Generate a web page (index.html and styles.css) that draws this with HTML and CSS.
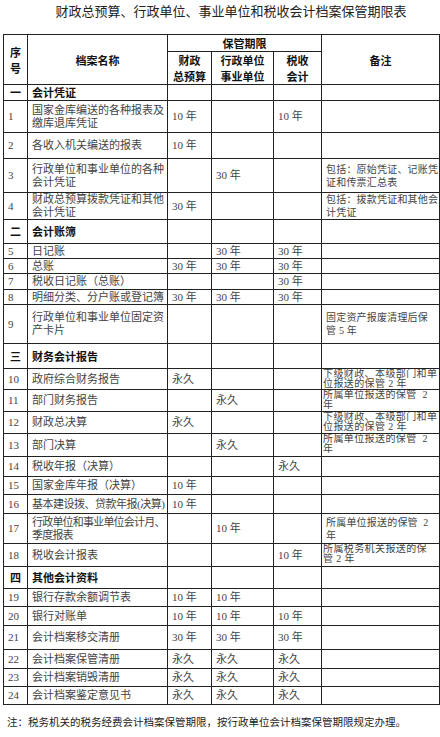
FILE: index.html
```html
<!DOCTYPE html>
<html lang="zh-CN">
<head>
<meta charset="utf-8">
<title>财政总预算、行政单位、事业单位和税收会计档案保管期限表</title>
<link rel="stylesheet" href="styles.css">
</head>
<body>
<div class="page">
  <h1 class="title">财政总预算、行政单位、事业单位和税收会计档案保管期限表</h1>
  <table class="grid">
    <colgroup>
      <col class="c-no"><col class="c-name"><col class="c-v1"><col class="c-v2"><col class="c-v3"><col class="c-rem">
    </colgroup>
    <thead>
      <tr class="h16">
        <th rowspan="2" class="no-h">序<br>号</th>
        <th rowspan="2">档案名称</th>
        <th colspan="3">保管期限</th>
        <th rowspan="2">备注</th>
      </tr>
      <tr class="h32">
        <th>财政<br>总预算</th>
        <th>行政单位<br>事业单位</th>
        <th>税收<br>会计</th>
      </tr>
    </thead>
    <tbody>
      <tr class="h16 cat"><td class="no">一</td><td>会计凭证</td><td></td><td></td><td></td><td></td></tr>
      <tr class="h32"><td class="no">1</td><td>国家金库编送的各种报表及<br>缴库退库凭证</td><td>10 年</td><td></td><td>10 年</td><td></td></tr>
      <tr class="h26"><td class="no">2</td><td>各收入机关编送的报表</td><td>10 年</td><td></td><td></td><td></td></tr>
      <tr class="h34"><td class="no">3</td><td>行政单位和事业单位的各种<br>会计凭证</td><td></td><td>30 年</td><td></td><td class="rem">包括：原始凭证、记账凭<br>证和传票汇总表</td></tr>
      <tr class="h27"><td class="no">4</td><td>财政总预算拨款凭证和其他<br>会计凭证</td><td>30 年</td><td></td><td></td><td class="rem">包括：拨款凭证和其他会<br>计凭证</td></tr>
      <tr class="h24 cat"><td class="no">二</td><td>会计账簿</td><td></td><td></td><td></td><td></td></tr>
      <tr class="h15"><td class="no">5</td><td>日记账</td><td></td><td>30 年</td><td>30 年</td><td></td></tr>
      <tr class="h15"><td class="no">6</td><td>总账</td><td>30 年</td><td>30 年</td><td>30 年</td><td></td></tr>
      <tr class="h16"><td class="no">7</td><td>税收日记账（总账）</td><td></td><td></td><td>30 年</td><td></td></tr>
      <tr class="h15"><td class="no">8</td><td>明细分类、分户账或登记簿</td><td>30 年</td><td>30 年</td><td>30 年</td><td></td></tr>
      <tr class="h39"><td class="no">9</td><td>行政单位和事业单位固定资<br>产卡片</td><td></td><td></td><td></td><td class="rem">固定资产报废清理后保<br>管 5 年</td></tr>
      <tr class="h25 cat"><td class="no">三</td><td>财务会计报告</td><td></td><td></td><td></td><td></td></tr>
      <tr class="h21"><td class="no">10</td><td>政府综合财务报告</td><td>永久</td><td></td><td></td><td class="rem tight">下级财政、本级部门和单<br>位报送的保管 2 年</td></tr>
      <tr class="h22"><td class="no">11</td><td>部门财务报告</td><td></td><td>永久</td><td></td><td class="rem tight">所属单位报送的保管&nbsp;&nbsp;2<br>年</td></tr>
      <tr class="h22"><td class="no">12</td><td>财政总决算</td><td>永久</td><td></td><td></td><td class="rem tight">下级财政、本级部门和单<br>位报送的保管 2 年</td></tr>
      <tr class="h23"><td class="no">13</td><td>部门决算</td><td></td><td>永久</td><td></td><td class="rem tight">所属单位报送的保管&nbsp;&nbsp;2<br>年</td></tr>
      <tr class="h20"><td class="no">14</td><td>税收年报（决算）</td><td></td><td></td><td>永久</td><td></td></tr>
      <tr class="h18"><td class="no">15</td><td>国家金库年报（决算）</td><td>10 年</td><td></td><td></td><td></td></tr>
      <tr class="h19"><td class="no">16</td><td class="squeeze">基本建设拨、贷款年报(决算)</td><td>10 年</td><td></td><td></td><td></td></tr>
      <tr class="h30"><td class="no">17</td><td class="squeeze-more">行政单位和事业单位会计月、<br>季度报表</td><td></td><td>10 年</td><td></td><td class="rem">所属单位报送的保管&nbsp;&nbsp;2<br>年</td></tr>
      <tr class="h23"><td class="no">18</td><td>税收会计报表</td><td></td><td></td><td>10 年</td><td class="rem tight">所属税务机关报送的保<br>管 2 年</td></tr>
      <tr class="h22 cat"><td class="no">四</td><td>其他会计资料</td><td></td><td></td><td></td><td></td></tr>
      <tr class="h18"><td class="no">19</td><td>银行存款余额调节表</td><td>10 年</td><td>10 年</td><td></td><td></td></tr>
      <tr class="h19"><td class="no">20</td><td>银行对账单</td><td>10 年</td><td>10 年</td><td>10 年</td><td></td></tr>
      <tr class="h24"><td class="no">21</td><td>会计档案移交清册</td><td>30 年</td><td>30 年</td><td>30 年</td><td></td></tr>
      <tr class="h19"><td class="no">22</td><td>会计档案保管清册</td><td>永久</td><td>永久</td><td>永久</td><td></td></tr>
      <tr class="h18"><td class="no">23</td><td>会计档案销毁清册</td><td>永久</td><td>永久</td><td>永久</td><td></td></tr>
      <tr class="h18"><td class="no">24</td><td>会计档案鉴定意见书</td><td>永久</td><td>永久</td><td>永久</td><td></td></tr>
    </tbody>
  </table>
  <p class="note">注：税务机关的税务经费会计档案保管期限，按行政单位会计档案保管期限规定办理。</p>
</div>
</body>
</html>
```
FILE: styles.css
```css
html, body {
  margin: 0;
  padding: 0;
  background: #ffffff;
}

.page {
  width: 440px;
  padding-top: 2px;
  font-family: "Liberation Serif", "Noto Sans CJK SC", serif;
  color: #444;
}

.title {
  margin: 0 0 14px 0;
  padding-left: 22px;
  text-align: center;
  font-family: "Noto Sans CJK SC", sans-serif;
  font-weight: 400;
  font-size: 13px;
  line-height: 18px;
  color: #222;
}

.grid {
  margin-left: 3px;
  width: 436px;
  border-collapse: collapse;
  table-layout: fixed;
  border: 1px solid #111;
}

.c-no { width: 24px; }
.c-name { width: 140px; }
.c-v1 { width: 44px; }
.c-v2 { width: 62px; }
.c-v3 { width: 48px; }
.c-rem { width: 118px; }

.grid th,
.grid td {
  border: 1px solid #222;
  padding: 0 0 0 4px;
  font-size: 11px;
  line-height: 13px;
  vertical-align: middle;
  white-space: nowrap;
  overflow: hidden;
  text-align: left;
}

.grid th {
  font-family: "Noto Sans CJK SC", sans-serif;
  font-weight: 700;
  color: #111;
  text-align: center;
  padding: 0;
  line-height: 16px;
}

.grid tr.cat td {
  font-family: "Noto Sans CJK SC", sans-serif;
  font-weight: 700;
  color: #111;
}

.grid tr.cat td.no {
  text-align: center;
  padding-left: 0;
}

.grid td.squeeze {
  letter-spacing: -0.5px;
}

.grid td.squeeze-more {
  letter-spacing: -0.8px;
}

.grid td.rem {
  font-size: 10px;
  line-height: 13px;
  letter-spacing: 0.2px;
  padding-left: 4px;
}

.grid td.tight {
  line-height: 10px;
  letter-spacing: 0.4px;
  padding-left: 1px;
  vertical-align: top;
  padding-top: 0;
}

.h15 { height: 15px; }
.h16 { height: 16px; }
.h18 { height: 18px; }
.h19 { height: 19px; }
.h20 { height: 20px; }
.h21 { height: 21px; }
.h22 { height: 22px; }
.h23 { height: 23px; }
.h24 { height: 24px; }
.h25 { height: 25px; }
.h26 { height: 26px; }
.h27 { height: 27px; }
.h30 { height: 30px; }
.h32 { height: 32px; }
.h34 { height: 34px; }
.h39 { height: 39px; }

.note {
  margin: 10px 0 0 7px;
  font-family: "Noto Sans CJK SC", sans-serif;
  font-size: 10.5px;
  line-height: 14px;
  color: #222;
}
```
